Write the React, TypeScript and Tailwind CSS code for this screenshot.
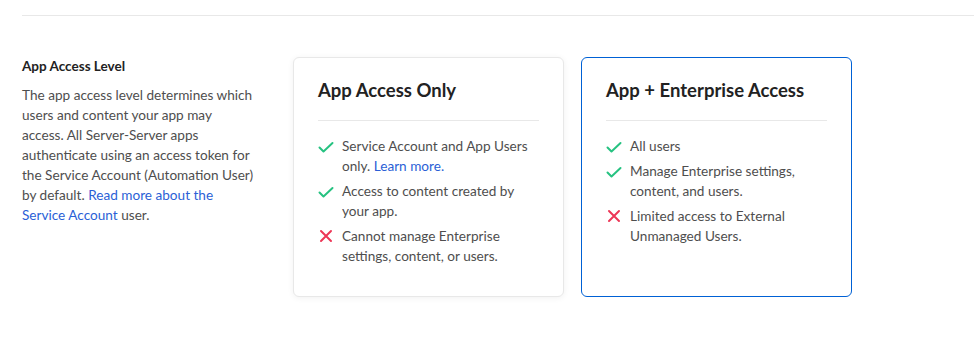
import React from "react";

function Check() {
  return (
    <svg width="16" height="16" viewBox="0 0 16 16" className="shrink-0 mt-[3px]">
      <path d="M1.5 8.5 L5.5 12.5 L14.5 4" fill="none" stroke="#26c281" strokeWidth="2" strokeLinecap="round" strokeLinejoin="round" />
    </svg>
  );
}

function Cross() {
  return (
    <svg width="16" height="16" viewBox="0 0 16 16" className="shrink-0 mt-[2px]">
      <path d="M3 3 L13 13 M13 3 L3 13" fill="none" stroke="#ed3757" strokeWidth="2" strokeLinecap="round" />
    </svg>
  );
}

type Item = { ok: boolean; text: React.ReactNode };

function Card({ title, items, selected }: { title: string; items: Item[]; selected?: boolean }) {
  return (
    <div
      className={
        selected
          ? "w-[271px] h-[240px] rounded-[6px] border border-[#0061d5] bg-white px-6 pt-[19px]"
          : "w-[271px] h-[240px] rounded-[6px] border border-[#e8e8e8] bg-white px-6 pt-[19px] shadow-[0_1px_6px_rgba(0,0,0,0.06)]"
      }
    >
      <h2 className="text-[18.5px] leading-[26px] font-bold text-[#222]">{title}</h2>
      <div className="mt-[17px] h-px bg-[#e8e8e8]" />
      <ul className="mt-[15px] flex flex-col gap-[5px]">
        {items.map((it, i) => (
          <li key={i} className="flex gap-2 text-[13.6px] leading-[20px] text-[#4e4e4e]">
            {it.ok ? <Check /> : <Cross />}
            <span>{it.text}</span>
          </li>
        ))}
      </ul>
    </div>
  );
}

export default function App() {
  return (
    <div className="w-[974px] h-[338px] bg-white font-['Lato',sans-serif] pl-[22px] pt-[15px]">
      <div className="h-px bg-[#e8e8e8]" />
      <div className="flex mt-[41px]">
        <div className="w-[233px] mr-[38px]">
          <h3 className="text-[13.5px] leading-[18px] font-bold text-[#222]">App Access Level</h3>
          <p className="mt-[10px] text-[13.6px] leading-[20px] text-[#4e4e4e]">
            The app access level determines which users and content your app may access. All Server-Server apps
            authenticate using an access token for the Service Account (Automation User) by default.{" "}
            <span className="text-[#2b5fd6]">Read more about the Service Account</span> user.
          </p>
        </div>
        <div className="flex gap-[17px]">
          <Card
            title="App Access Only"
            items={[
              { ok: true, text: <>Service Account and App Users only. <span className="text-[#2b5fd6]">Learn more.</span></> },
              { ok: true, text: "Access to content created by your app." },
              { ok: false, text: "Cannot manage Enterprise settings, content, or users." },
            ]}
          />
          <Card
            selected
            title="App + Enterprise Access"
            items={[
              { ok: true, text: "All users" },
              { ok: true, text: "Manage Enterprise settings, content, and users." },
              { ok: false, text: "Limited access to External Unmanaged Users." },
            ]}
          />
        </div>
      </div>
    </div>
  );
}
